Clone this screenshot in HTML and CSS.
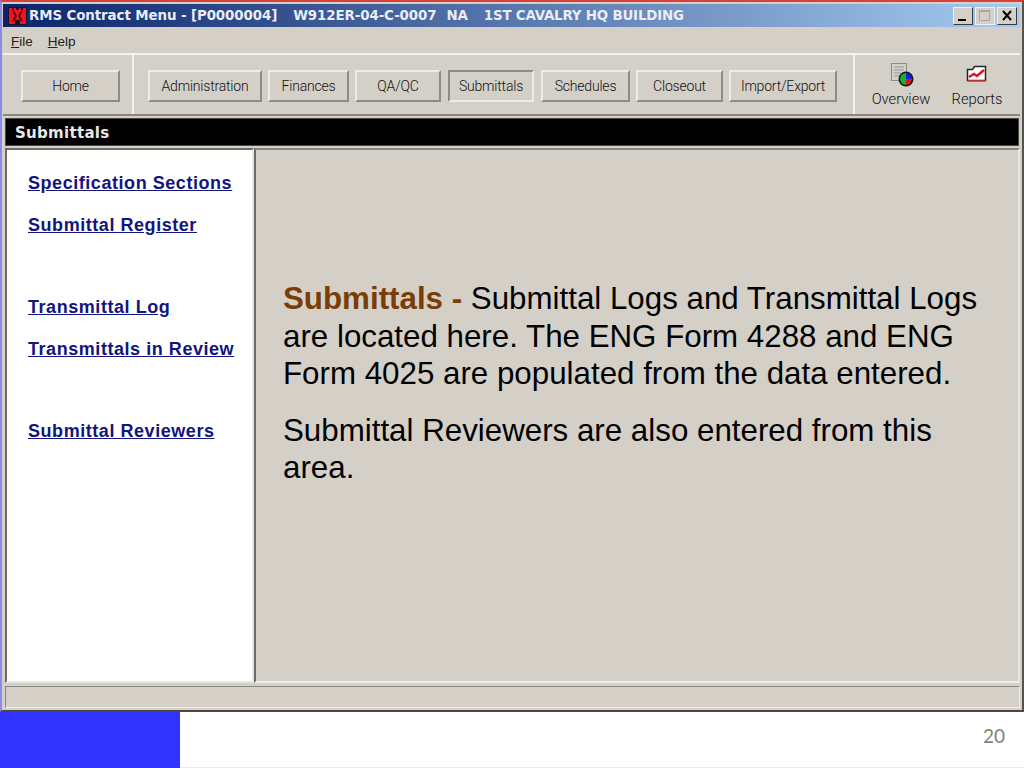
FILE: index.html
```html
<!DOCTYPE html>
<html lang="en">
<head>
<meta charset="utf-8">
<title>RMS Contract Menu</title>
<link rel="stylesheet" href="styles.css">
</head>
<body>
<div class="window">
  <header class="titlebar">
    <svg class="logo" width="19" height="18" viewBox="0 0 19 18"><rect x="0" y="0" width="19" height="18" fill="#1a1030"/><path d="M1 1h3v2h2V1h2v2h3V1h2v2h2V1h3v16h-6v-4H7v4H1z" fill="#f0141c"/><path d="M5 4l3 5-3 5M14 4l-3 5 3 5" fill="none" stroke="#40080c" stroke-width="1.500"/></svg>
    <div class="title-text"><span>RMS Contract Menu - [P0000004]</span><span class="t2">W912ER-04-C-0007</span><span class="t3">NA</span><span class="t4">1ST CAVALRY HQ BUILDING</span></div>
    <div class="controls">
      <div class="ctl"><svg width="18" height="16" viewBox="0 0 18 16"><rect x="4" y="11" width="8" height="2" fill="#000"/></svg></div>
      <div class="ctl off"><svg width="18" height="16" viewBox="0 0 18 16"><path d="M3.500 2.500h10v10h-10z" fill="none" stroke="#a9a79f"/><path d="M3 2h11v2H3z" fill="#a9a79f"/></svg></div>
      <div class="ctl"><svg width="18" height="16" viewBox="0 0 18 16"><path d="M5 3l8 9M13 3l-8 9" stroke="#000" stroke-width="2"/></svg></div>
    </div>
  </header>
  <nav class="menubar"><span class="menu"><u>F</u>ile</span><span class="menu"><u>H</u>elp</span></nav>
  <div class="toolbar">
    <section class="tb home"><button class="btn b-home">Home</button></section>
    <section class="tb mods">
      <button class="btn b-admin">Administration</button>
      <button class="btn b-fin">Finances</button>
      <button class="btn b-qa">QA/QC</button>
      <button class="btn b-sub active">Submittals</button>
      <button class="btn b-sch">Schedules</button>
      <button class="btn b-clo">Closeout</button>
      <button class="btn b-imp">Import/Export</button>
    </section>
    <section class="tb tools">
      <div class="tool t-over">
        <svg width="26" height="24" viewBox="0 0 26 24"><rect x="3.500" y="0.500" width="15" height="17" fill="#d2d1ca" stroke="#8a8983"/><path d="M6 4h10M6 7h10M6 10h7M6 13h5" stroke="#96958f"/><circle cx="18" cy="16" r="7.500" fill="#14141c"/><path d="M18 10a6 6 0 0 1 6 6h-6z" fill="#1420d8"/><path d="M18 16h6a6 6 0 0 1-6 6z" fill="#d81818"/><path d="M18 10v12a6 6 0 0 1 0-12z" fill="#18b030"/></svg>
        <span>Overview</span>
      </div>
      <div class="tool t-rep">
        <svg width="24" height="24" viewBox="0 0 24 24"><path d="M2.500 17.500v-11h5l2-3h11v14z" fill="#fff" stroke="#26262a" stroke-width="1.500"/><path d="M4 14l5-3 3 2 7-6" fill="none" stroke="#e0141c" stroke-width="2.500"/><path d="M3 18h18" stroke="#e23a3a" stroke-width="1.500"/></svg>
        <span>Reports</span>
      </div>
    </section>
  </div>
  <h1 class="heading">Submittals</h1>
  <main class="panes">
    <aside class="links">
      <a class="lnk l1" href="#">Specification Sections</a>
      <a class="lnk l2" href="#">Submittal Register</a>
      <a class="lnk l3" href="#">Transmittal Log</a>
      <a class="lnk l4" href="#">Transmittals in Review</a>
      <a class="lnk l5" href="#">Submittal Reviewers</a>
    </aside>
    <article class="content">
      <p><b>Submittals - </b>Submittal Logs and Transmittal Logs are located here. The ENG Form 4288 and ENG Form 4025 are populated from the data entered.</p>
      <p>Submittal Reviewers are also entered from this area.</p>
    </article>
  </main>
  <div class="status"></div>
</div>
<footer class="footer"><div class="blue"></div><div class="num">20</div></footer>
</body>
</html>
```
FILE: styles.css
```css
* { box-sizing: border-box; }
html, body { margin: 0; padding: 0; }
body { width: 1024px; height: 768px; overflow: hidden; background: #fff; font-family: "Liberation Sans", Arial, sans-serif; display: flex; flex-direction: column; }
.window { height: 712px; flex: none; background: #d4d0c8; border-top: 2px solid #d8403c; border-left: 2px solid #8a8ce8; border-right: 2px solid #55534e; border-bottom: 2px solid #4a4845; padding: 2px 2px 2px 1px; display: flex; flex-direction: column; }
.titlebar { height: 23px; flex: none; background: linear-gradient(90deg, #0a246a, #a6caf0); display: flex; align-items: center; padding-left: 5px; color: #e8edf8; }
.logo { flex: none; }
.title-text { flex: 1; margin-left: 2px; font: bold 13.400px "DejaVu Sans", sans-serif; white-space: nowrap; display: flex; letter-spacing: -0.100px; }
.t2 { margin-left: 16px; }
.t3 { margin-left: 10px; }
.t4 { margin-left: 16px; letter-spacing: -0.200px; }
.controls { display: flex; flex: none; gap: 2px; margin-right: 3px; }
.ctl { width: 20px; height: 18px; background: #d4d0c8; border: 1px solid; border-color: #f4f2ec #3a3936 #3a3936 #f4f2ec; display: flex; align-items: center; justify-content: center; }
.ctl.off { border-color: #f4f2ec; }
.ctl svg { display: block; }
.menubar { height: 26px; flex: none; display: flex; align-items: center; gap: 15px; padding: 2px 0 0 8px; font: 13.500px "Liberation Sans", sans-serif; color: #222; }
.toolbar { height: 63px; flex: none; display: flex; border-top: 2px solid #f4f2ec; border-bottom: 2px solid #8a8880; }
.tb { display: flex; align-items: center; height: 100%; padding-top: 2px; }
.home { width: 131px; padding-left: 18px; border-right: 2px solid #f4f2ec; }
.mods { width: 721px; padding-left: 14px; gap: 6px; border-right: 2px solid #f4f2ec; }
.tools { flex: 1; padding-left: 16px; gap: 21px; }
.btn { height: 32px; padding: 0; background: #d4d0c8; border: 2px solid; border-color: #eeece6 #8e8c84 #8e8c84 #eeece6; font: 300 14px "Roboto", sans-serif; letter-spacing: -0.200px; color: #111; }
.b-home { width: 99px; }
.b-admin { width: 114px; }
.b-fin { width: 81px; }
.b-qa { width: 86px; }
.b-sub { width: 86px; margin-left: 1px; }
.b-sch { width: 89px; margin-left: 1px; }
.b-clo { width: 87px; }
.b-imp { width: 108px; }
.active { border-color: #8e8c84 #eeece6 #eeece6 #8e8c84; }
.tool { display: flex; flex-direction: column; align-items: center; font: 300 14.700px "Roboto", sans-serif; color: #111; }
.tool svg { display: block; margin-bottom: 3px; }
.t-over { width: 60px; }
.t-rep { width: 50px; }
.heading { margin: 2px 1px 2px 2px; height: 28px; flex: none; background: #000; border: 1px solid #4a4845; color: #e8e8e8; font: bold 15px/28px "DejaVu Sans", sans-serif; padding-left: 9px; letter-spacing: 0.300px; }
.panes { height: 535px; flex: none; display: flex; margin-left: 2px; }
.links { width: 249px; flex: none; background: #fff; border: 2px solid; border-color: #6c6b66 #e8e6e0 #e8e6e0 #6c6b66; display: flex; flex-direction: column; align-items: flex-start; padding: 23px 0 0 21px; }
.lnk { color: #14147e; font: bold 18px/20px "Liberation Sans", sans-serif; letter-spacing: 0.550px; text-decoration: underline; white-space: nowrap; }
.l2 { margin-top: 22px; }
.l3 { margin-top: 62px; }
.l4 { margin-top: 22px; }
.l5 { margin-top: 62px; }
.content { flex: 1; border-left: 2px solid #6c6b66; padding: 130px 36px 0 27px; font-size: 31.300px; line-height: 37.500px; color: #000; border-top: 2px solid #8a8880; border-right: 2px solid #e8e6e0; border-bottom: 2px solid #f0eee8; }
.content p { margin: 0 0 19px; }
.content b { color: #7a3d06; }
.status { margin: 3px 0 0 2px; height: 22px; flex: none; border: 1px solid; border-color: #8a8880 #f0eee8 #f0eee8 #8a8880; }
.footer { flex: 1; display: flex; }
.blue { width: 180px; background: #3333ff; }
.num { flex: 1; text-align: right; padding: 12px 19px 0 0; font: 19px "Lato", sans-serif; color: #808080; border-bottom: 1px solid #ececec; }
```
